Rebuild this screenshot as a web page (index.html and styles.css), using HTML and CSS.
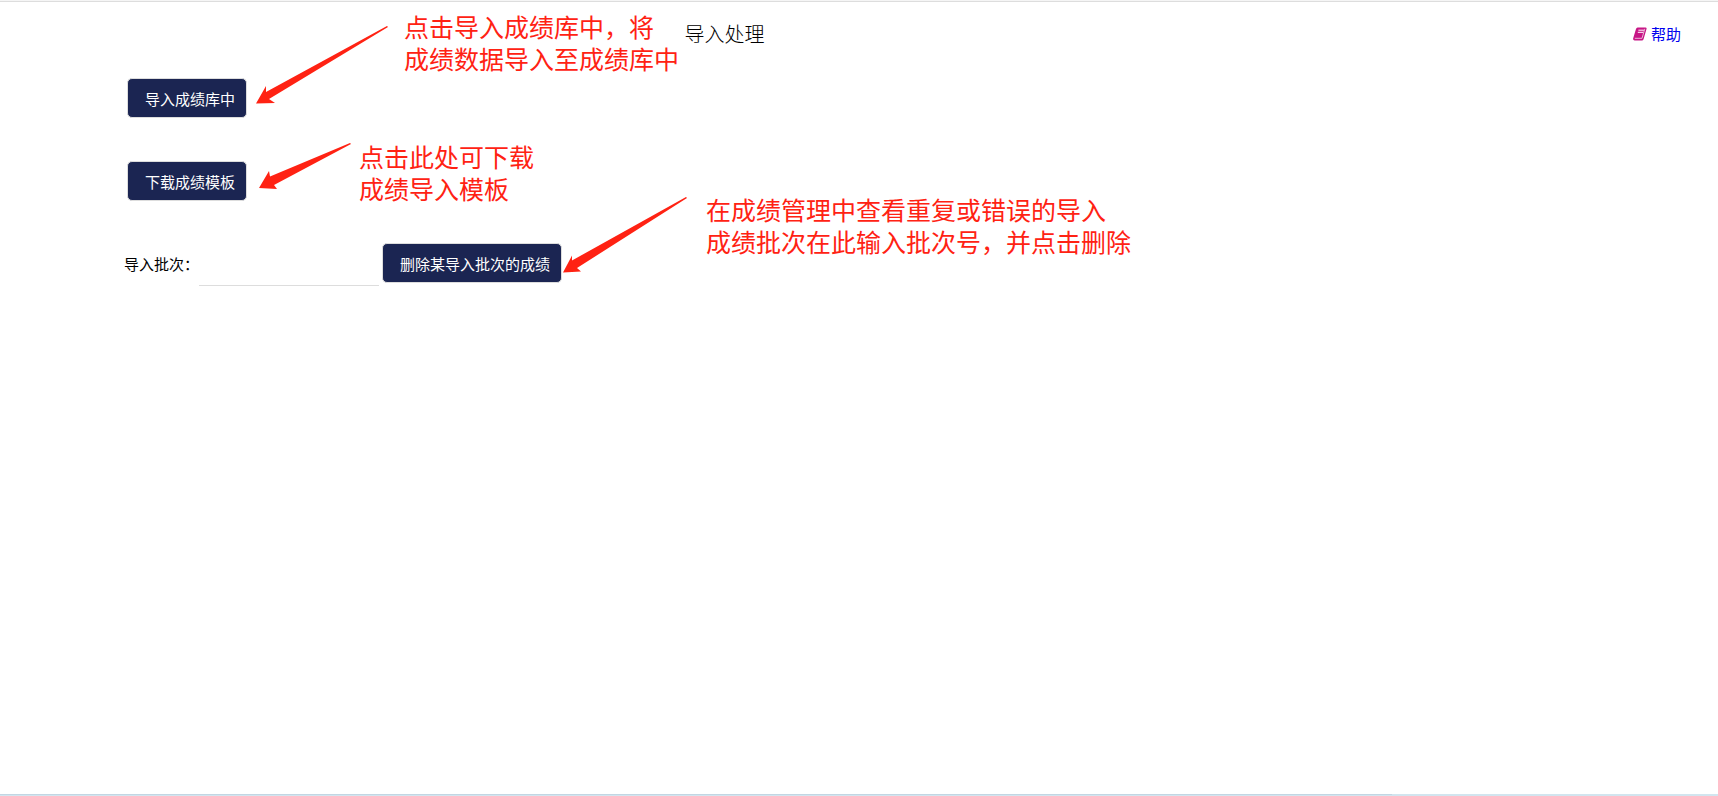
FILE: index.html
```html
<!DOCTYPE html>
<html lang="zh-CN">
<head>
    <meta charset="UTF-8" />
    <title>导入处理</title>
    <link rel="stylesheet" href="styles.css">
</head>
<body>
    <header>
        <h1>导入处理</h1>
        <a href="#" class="help">
            <svg class="help-icon" viewBox="0 0 14 14" aria-hidden="true">
                <path d="M4.6 0.5H12.4Q14 0.6 13.5 2L10.6 12Q10.2 13.5 8.8 13.5H1.6Q-0.3 13.3 0.2 11.2L2.9 2.2Q3.3 0.7 4.6 0.5Z" fill="#c71585"/>
                <path d="M5.4 3.2H11M4.8 5.3H10.4" stroke="#fff" stroke-width="1"/>
                <path d="M1.8 11.3H9L11.8 1.8" fill="none" stroke="#e9b5d5" stroke-width="1"/>
            </svg>
            <span>帮助</span>
        </a>
    </header>
    <main>
        <div class="row"><button type="button" class="btn">导入成绩库中</button></div>
        <div class="row"><button type="button" class="btn">下载成绩模板</button></div>
        <form class="batch">
            <label for="batch">导入批次：</label>
            <input type="text" id="batch" name="batch">
            <button type="button" class="btn">删除某导入批次的成绩</button>
        </form>
    </main>
    <footer><div class="progress"></div></footer>

    <!-- 操作说明 -->
    <div class="note note-import">
        <svg width="132" height="78" viewBox="0 0 132 78" aria-hidden="true"><path d="M0 77.5L10 60V66L131 0L132 1L13 73L19 77Z"/></svg>
        <p>点击导入成绩库中，将<br>成绩数据导入至成绩库中</p>
    </div>
    <div class="note note-template">
        <svg width="92" height="46" viewBox="0 0 92 46" aria-hidden="true"><path d="M0 45L10 28L11 33.5L91 0L92 1L15 42L18 46Z"/></svg>
        <p>点击此处可下载<br>成绩导入模板</p>
    </div>
    <div class="note note-batch">
        <svg width="124" height="76" viewBox="0 0 124 76" aria-hidden="true"><path d="M0 75.5L9 58.5V63.5L123 0L124 1L14 71L18 74.5Z"/></svg>
        <p>在成绩管理中查看重复或错误的导入<br>成绩批次在此输入批次号，并点击删除</p>
    </div>
</body>
</html>
```
FILE: styles.css
```css
* {
    margin: 0;
    padding: 0;
    box-sizing: border-box;
}
body {
    display: flex;
    flex-direction: column;
    min-height: 100vh;
    position: relative;
    background: #fff;
    color: #000;
    font-family: "Noto Sans CJK SC", sans-serif;
    font-size: 15px;
    border-top: 1px solid #f5f5f5;
}
header {
    display: grid;
    grid-template-columns: 2fr 2fr 1fr;
    align-items: center;
    padding: 16px 37px 16px 20px;
    border-top: 1px solid #ddd;
}
h1 { grid-column: 2; font-size: 20px; font-weight: 300; line-height: 32px; }
.help {
    display: flex;
    align-items: center;
    justify-self: end;
    gap: 4px;
    color: #00e;
    text-decoration: none;
    line-height: 24px;
}
.help:hover { text-decoration: underline; }
.help-icon { width: 14px; height: 14px; }
main { flex: 1; padding: 12px 124px; }
.row { margin: 0 0 43px 3px; }
.batch {
    display: flex;
    align-items: center;
    gap: 3px;
    margin-top: -4px;
}
.batch label { margin-right: -3px; }
.batch input {
    width: 180px;
    height: 46px;
    padding: 0 4px;
    border: 0;
    border-bottom: 1px solid #ddd;
    background: none;
    font: inherit;
    outline: none;
}
.btn {
    display: block;
    height: 40px;
    padding: 0 11px 0 17px;
    border: 1px solid #ddd;
    border-radius: 5px;
    background: #1b2552;
    color: #fff;
    font: inherit;
    cursor: pointer;
}
.btn:hover { background: #2b3a78; }
footer { height: 2px; background: #d2e5ef; }
.progress { width: 81%; height: 1px; background: #c2d6e3; }

/* notes lie over the form */
.note {
    position: absolute;
    display: flex;
    align-items: flex-start;
    color: #ff2213;
    font-size: 25px;
    line-height: 32px;
    white-space: nowrap;
    pointer-events: none;
}
.note svg { fill: #ff2213; }
.note-import { left: 256px; top: 9px; gap: 16px; }
.note-import svg { margin-top: 16px; }
.note-template { left: 259px; top: 139px; gap: 8px; }
.note-template svg { margin-top: 3px; }
.note-batch { left: 563px; top: 192px; gap: 19px; }
.note-batch svg { margin-top: 4px; }
```
